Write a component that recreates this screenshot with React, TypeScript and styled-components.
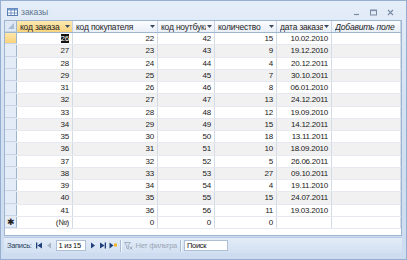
import React from "react";
import styled, { createGlobalStyle } from "styled-components";

const font = `"Liberation Sans", Arial, sans-serif`;

const GlobalStyle = createGlobalStyle`
  html, body { margin: 0; padding: 0; background: #fff; }
  body { font-family: ${font}; font-size: 8px; letter-spacing: -0.25px; color: #000; }
`;

const GRID = "12px 56px 85px 57px 62px 55px 1fr";

type Order = {
  id: number;
  customer: number;
  laptop: number;
  qty: number;
  date: string;
};

const orders: Order[] = [
  { id: 26, customer: 22, laptop: 42, qty: 15, date: "10.02.2010" },
  { id: 27, customer: 23, laptop: 43, qty: 9, date: "19.12.2010" },
  { id: 28, customer: 24, laptop: 44, qty: 4, date: "20.12.2011" },
  { id: 29, customer: 25, laptop: 45, qty: 7, date: "30.10.2011" },
  { id: 31, customer: 26, laptop: 46, qty: 8, date: "06.01.2010" },
  { id: 32, customer: 27, laptop: 47, qty: 13, date: "24.12.2011" },
  { id: 33, customer: 28, laptop: 48, qty: 12, date: "19.09.2010" },
  { id: 34, customer: 29, laptop: 49, qty: 15, date: "14.12.2011" },
  { id: 35, customer: 30, laptop: 50, qty: 18, date: "13.11.2011" },
  { id: 36, customer: 31, laptop: 51, qty: 10, date: "18.09.2010" },
  { id: 37, customer: 32, laptop: 52, qty: 5, date: "26.06.2011" },
  { id: 38, customer: 33, laptop: 53, qty: 27, date: "09.10.2011" },
  { id: 39, customer: 34, laptop: 54, qty: 4, date: "19.11.2010" },
  { id: 40, customer: 35, laptop: 55, qty: 15, date: "24.07.2011" },
  { id: 41, customer: 36, laptop: 56, qty: 11, date: "19.03.2010" },
];

const headers = ["код заказа", "код покупателя", "код ноутбука", "количество", "дата заказа"];

const Window = styled.div`
  width: 407px;
  height: 260px;
  box-sizing: border-box;
  display: flex;
  flex-direction: column;
  padding: 0 4px 6px 3px;
  border: 1px solid #97afcf;
  background: linear-gradient(#e4edf8, #d3e1f3 40%, #cddcf0);
`;

const TitleBar = styled.div`
  height: 19px;
  box-sizing: border-box;
  padding: 3px 0 0 3px;
  display: flex;
  align-items: center;
  gap: 3px;
  color: #60748f;
  font-size: 8.5px;
  letter-spacing: 0;
`;

const WindowButtons = styled.div`
  margin-left: auto;
  display: flex;
  gap: 10px;
  padding-right: 8px;
`;

const Grid = styled.div`
  flex: 1;
  display: flex;
  flex-direction: column;
  background: #fff;
  border: 1px solid #9fb4cf;
`;

const Row = styled.div<{ $alt?: boolean }>`
  display: grid;
  grid-template-columns: ${GRID};
  height: 12.25px;
  box-sizing: border-box;
  background: ${(p) => (p.$alt ? "#f1f1f1" : "#fff")};
  border-bottom: 1px solid #e6eaf0;
`;

const HeaderRow = styled.div`
  display: grid;
  grid-template-columns: ${GRID};
  height: 12px;
  box-sizing: border-box;
  background: linear-gradient(#fbfcfe, #e9eff8);
  border-bottom: 1px solid #9eb5d0;
`;

const Selector = styled.div<{ $active?: boolean; $corner?: boolean }>`
  box-sizing: border-box;
  border-right: 1px solid #9eb5d0;
  border-bottom: 1px solid #c6d5e8;
  background: ${(p) =>
    p.$active ? "linear-gradient(#fde7aa, #f9d27c)" : p.$corner ? "#dfe8f5" : "#e4ecf8"};
  display: flex;
  align-items: center;
  justify-content: center;
  font-size: 9px;
  color: #222;
`;

const HeaderCell = styled.div<{ $active?: boolean; $italic?: boolean }>`
  box-sizing: border-box;
  display: flex;
  align-items: center;
  gap: 1px;
  padding: 0 2px 0 3px;
  overflow: hidden;
  white-space: nowrap;
  border-right: 1px solid #c5d2e3;
  background: ${(p) => (p.$active ? "linear-gradient(#fde9b0, #f8d37f)" : "transparent")};
  font-size: 8.5px;
  letter-spacing: -0.2px;
  font-style: ${(p) => (p.$italic ? "italic" : "normal")};
  color: #1e1e1e;
`;

const HeaderText = styled.span`
  flex: 1;
  overflow: hidden;
`;

const Cell = styled.div<{ $left?: boolean }>`
  box-sizing: border-box;
  padding: 0 3px;
  text-align: ${(p) => (p.$left ? "left" : "right")};
  border-right: 1px solid #d3dbe6;
  line-height: 11px;
  white-space: nowrap;
  overflow: hidden;
  color: #1a1a1a;
`;

const Picked = styled.span`
  background: #111;
  color: #fff;
`;

const StatusBar = styled.div`
  height: 15px;
  display: flex;
  align-items: center;
  gap: 3px;
  padding-left: 3px;
  margin-top: 1px;
  border-top: 1px solid #b7c9e0;
  background: linear-gradient(#e3ecf8, #d2e0f2);
  color: #2c3f5e;
  font-size: 7.5px;
  letter-spacing: -0.3px;
  white-space: nowrap;
`;

const NavGroup = styled.div`
  display: flex;
  align-items: center;
  gap: 2px;
`;

const RecordBox = styled.div`
  width: 30px;
  height: 11px;
  box-sizing: border-box;
  background: #fff;
  border: 1px solid #aebfd6;
  padding-left: 2px;
  line-height: 9px;
  color: #111;
`;

const Divider = styled.div`
  width: 1px;
  height: 12px;
  background: #a9bcd5;
  box-shadow: 1px 0 0 #f4f8fd;
`;

const FilterLabel = styled.div`
  display: flex;
  align-items: center;
  gap: 3px;
  color: #9aa6b6;
`;

const SearchBox = styled.div`
  width: 44px;
  height: 11px;
  box-sizing: border-box;
  background: #fff;
  border: 1px solid #aebfd6;
  padding-left: 2px;
  line-height: 9px;
  color: #111;
`;

const Arrow = () => (
  <svg width="5" height="3" viewBox="0 0 5 3">
    <path d="M0 0h5L2.5 3z" fill="#3a4a60" />
  </svg>
);

const TableIcon = () => (
  <svg width="11" height="8" viewBox="0 0 11 8">
    <rect x="0.5" y="0.5" width="10" height="7" fill="#fff" stroke="#5a7fb4" />
    <rect x="0.5" y="0.5" width="10" height="2" fill="#7d9fd0" />
    <path d="M0.5 5h10M4 0.5v7M7.5 0.5v7" stroke="#5a7fb4" strokeWidth="0.8" />
  </svg>
);

const Nav = ({ kind, off }: { kind: "first" | "prev" | "next" | "last" | "new"; off?: boolean }) => {
  const c = off ? "#a8b4c4" : "#1f3f7a";
  return (
    <svg width="8" height="7" viewBox="0 0 8 7">
      {kind === "first" && (
        <>
          <rect x="1" y="0.5" width="1.3" height="6" fill={c} />
          <path d="M7 0.5v6L2.5 3.5z" fill={c} />
        </>
      )}
      {kind === "prev" && <path d="M6 0.5v6L2 3.5z" fill={c} />}
      {kind === "next" && <path d="M2 0.5v6L6 3.5z" fill={c} />}
      {kind === "last" && (
        <>
          <path d="M1 0.5v6L5.5 3.5z" fill={c} />
          <rect x="5.7" y="0.5" width="1.3" height="6" fill={c} />
        </>
      )}
      {kind === "new" && (
        <>
          <path d="M0.5 0.5v6L4.5 3.5z" fill={c} />
          <rect x="5" y="1.5" width="3" height="3" fill="#f2b626" />
        </>
      )}
    </svg>
  );
};

const FilterIcon = () => (
  <svg width="9" height="8" viewBox="0 0 9 8">
    <path d="M0.5 0.5h6L4.3 3.5v3.5l-1.6-1V3.5z" fill="none" stroke="#a3afbf" />
    <path d="M5.5 4.5l3 3M8.5 4.5l-3 3" stroke="#a3afbf" />
  </svg>
);

export default function App() {
  return (
    <>
      <GlobalStyle />
      <Window>
        <TitleBar>
          <TableIcon />
          <span>заказы</span>
          <WindowButtons>
            <svg width="7" height="7" viewBox="0 0 7 7">
              <path d="M1 5.5h5" stroke="#7a8ba3" strokeWidth="1.2" />
            </svg>
            <svg width="7" height="7" viewBox="0 0 7 7">
              <rect x="0.5" y="1" width="6" height="5" fill="none" stroke="#7a8ba3" />
              <path d="M0.5 1.6h6" stroke="#7a8ba3" />
            </svg>
            <svg width="7" height="7" viewBox="0 0 7 7">
              <path d="M1 1l5 5M6 1l-5 5" stroke="#7a8ba3" strokeWidth="1.1" />
            </svg>
          </WindowButtons>
        </TitleBar>

        <Grid>
          <HeaderRow>
            <Selector $corner>
              <svg width="6" height="6" viewBox="0 0 6 6">
                <path d="M6 0v6H0z" fill="#a9bcd6" />
              </svg>
            </Selector>
            {headers.map((h, i) => (
              <HeaderCell key={h} $active={i === 0}>
                <HeaderText>{h}</HeaderText>
                <Arrow />
              </HeaderCell>
            ))}
            <HeaderCell $italic>
              <HeaderText>Добавить поле</HeaderText>
            </HeaderCell>
          </HeaderRow>

          {orders.map((o, i) => (
            <Row key={o.id} $alt={i % 2 === 1}>
              <Selector $active={i === 0} />
              <Cell>{i === 0 ? <Picked>{o.id}</Picked> : o.id}</Cell>
              <Cell>{o.customer}</Cell>
              <Cell>{o.laptop}</Cell>
              <Cell>{o.qty}</Cell>
              <Cell>{o.date}</Cell>
              <Cell />
            </Row>
          ))}
          <Row>
            <Selector>✱</Selector>
            <Cell>(№)</Cell>
            <Cell>0</Cell>
            <Cell>0</Cell>
            <Cell>0</Cell>
            <Cell />
            <Cell />
          </Row>
        </Grid>

        <StatusBar>
          <span>Запись:</span>
          <NavGroup>
            <Nav kind="first" />
            <Nav kind="prev" off />
          </NavGroup>
          <RecordBox>1 из 15</RecordBox>
          <NavGroup>
            <Nav kind="next" />
            <Nav kind="last" />
            <Nav kind="new" />
          </NavGroup>
          <Divider />
          <FilterLabel>
            <FilterIcon />
            Нет фильтра
          </FilterLabel>
          <Divider />
          <SearchBox>Поиск</SearchBox>
        </StatusBar>
      </Window>
    </>
  );
}
